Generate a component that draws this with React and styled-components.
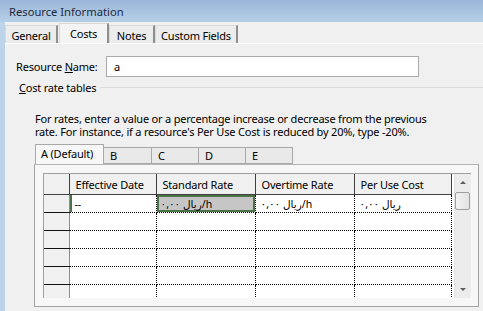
import styled, { createGlobalStyle } from "styled-components";

const GlobalStyle = createGlobalStyle`
  html, body {
    margin: 0;
    padding: 0;
    background: #f0f0f0;
  }
  body {
    font-family: "Noto Sans", "DejaVu Sans", sans-serif;
    font-size: 11px;
    letter-spacing: -0.2px;
    color: #000;
  }
`;

const Window = styled.div`
  width: 483px;
  height: 311px;
  overflow: hidden;
  display: flex;
  flex-direction: column;
  background: #f0f0f0;
`;

const TitleBar = styled.div`
  height: 22px;
  flex: none;
  display: flex;
  align-items: center;
  padding-left: 9px;
  font-size: 11.2px;
  letter-spacing: 0;
  color: #1e2b3c;
  background: linear-gradient(#9bb7d8, #b6cfe8);
`;

const Body = styled.div`
  flex: 1;
  display: flex;
  border-left: 5px solid #bcd3ea;
`;

const Content = styled.div`
  flex: 1;
  display: flex;
  flex-direction: column;
`;

const TabStrip = styled.div`
  height: 21px;
  flex: none;
  display: flex;
  align-items: flex-end;
  border-bottom: 1px solid #fbfbfb;
`;

const Tab = styled.div`
  width: ${(p) => p.$w}px;
  height: ${(p) => (p.$active ? 20 : 18)}px;
  box-sizing: border-box;
  display: flex;
  align-items: center;
  justify-content: center;
  padding-top: ${(p) => (p.$active ? 0 : 2)}px;
  border: 1px solid #d9d9d9;
  border-right: 2px solid #8f8f8f;
  border-bottom: none;
  background: ${(p) => (p.$active ? "#f4f4f4" : "#ececec")};
  margin-left: ${(p) => (p.$active ? 1 : 0)}px;
`;

const Page = styled.div`
  padding: 12px 0 0 11px;
  display: flex;
  flex-direction: column;
`;

const NameRow = styled.div`
  display: flex;
  align-items: center;
  height: 21px;
`;

const Label = styled.label`
  width: 90px;
  white-space: nowrap;
`;

const TextInput = styled.div`
  width: 313px;
  height: 21px;
  box-sizing: border-box;
  border: 1px solid #ababab;
  background: #fff;
  display: flex;
  align-items: center;
  padding-left: 7px;
`;

const GroupHead = styled.div`
  display: flex;
  align-items: center;
  margin: 2px 0 0 3px;
  height: 16px;
  &::after {
    content: "";
    flex: 1;
    margin-left: 4px;
    border-top: 1px solid #dcdcdc;
  }
`;

const Note = styled.p`
  margin: 17px 0 0 19px;
  line-height: 13px;
  width: 400px;
`;

const InnerTabs = styled.div`
  margin: 6px 0 0 19px;
  height: 20px;
  display: flex;
  align-items: flex-end;
`;

const InnerTab = styled.div`
  width: ${(p) => p.$w}px;
  height: ${(p) => (p.$active ? 20 : 17)}px;
  box-sizing: border-box;
  border: 1px solid #a9a9a9;
  border-bottom: ${(p) => (p.$active ? "none" : "1px solid #a9a9a9")};
  border-left: ${(p) => (p.$first ? "1px solid #a9a9a9" : "none")};
  background: ${(p) => (p.$active ? "#f7f7f7" : "#e9e9e9")};
  padding: ${(p) => (p.$active ? "0 0 2px 5px" : "0 0 0 6px")};
  display: flex;
  align-items: center;
`;

const InnerPanel = styled.div`
  margin-left: 18px;
  width: 445px;
  height: 143px;
  box-sizing: border-box;
  border: 1px solid #a3a3a3;
  border-top-color: #b5b5b5;
  background: #f7f7f7;
  padding: 8px 0 0 8px;
  display: flex;
`;

const GridFrame = styled.div`
  height: 124px;
  width: 427px;
  overflow: hidden;
  display: flex;
  background: #fff;
  border-left: 1px solid #a0a0a0;
  border-top: 1px solid #a0a0a0;
`;

const Table = styled.table`
  border-collapse: collapse;
  table-layout: fixed;
  width: 407px;
  height: fit-content;
`;

const HeadCell = styled.th`
  height: 20px;
  padding: 0 0 0 6px;
  font-weight: normal;
  text-align: left;
  background: #f0f0f0;
  border-right: 1px solid #404040;
  border-bottom: 1px solid #404040;
  white-space: nowrap;
  overflow: hidden;
`;

const RowHead = styled.td`
  height: 17px;
  padding: 0;
  background: #f0f0f0;
  border-right: 1px solid #8c8c8c;
  border-bottom: 1px solid #111;
`;

const Cell = styled.td`
  height: 17px;
  padding: 0 0 0 ${(p) => (p.$sel ? 4 : 5)}px;
  font-size: 10.5px;
  white-space: nowrap;
  overflow: hidden;
  border-right: 1px dotted #000;
  border-bottom: 1px dotted #000;
  background: ${(p) => (p.$sel ? "#c6c6c6" : "#fff")};
  box-shadow: ${(p) =>
    p.$sel
      ? "inset 0 0 0 2px #4b7449"
      : p.$mark
      ? "inset 2px 0 0 #4b7449"
      : "none"};
`;

const ScrollBar = styled.div`
  width: 17px;
  margin-left: 2px;
  box-sizing: border-box;
  background: #ececec;
  border-left: 1px solid #e2e2e2;
  display: flex;
  flex-direction: column;
  align-items: center;
`;

const Arrow = styled.div`
  width: 0;
  height: 0;
  border-left: 3px solid transparent;
  border-right: 3px solid transparent;
  ${(p) =>
    p.$down
      ? "border-top: 3px solid #5c5c5c; margin-top: auto; margin-bottom: 7px;"
      : "border-bottom: 3px solid #5c5c5c; margin-top: 7px;"}
`;

const Thumb = styled.div`
  width: 15px;
  height: 18px;
  margin-top: 8px;
  box-sizing: border-box;
  border: 1px solid #9f9f9f;
  border-radius: 2px;
  background: linear-gradient(90deg, #f3f3f3, #e2e2e2);
`;

const rate = "\u0660,\u0660\u0660\u200E \u0631\u064A\u0627\u0644\u200E/h";
const cost = "\u0660,\u0660\u0660\u200E \u0631\u064A\u0627\u0644";

const columns = [
  { w: 25, title: "" },
  { w: 87, title: "Effective Date" },
  { w: 99, title: "Standard Rate" },
  { w: 99, title: "Overtime Rate" },
  { w: 97, title: "Per Use Cost" },
];

export default function App() {
  const emptyRows = [1, 2, 3, 4, 5];
  return (
    <Window>
      <GlobalStyle />
      <TitleBar>Resource Information</TitleBar>
      <Body>
        <Content>
          <TabStrip>
            <Tab $w={53}>General</Tab>
            <Tab $w={50} $active>
              Costs
            </Tab>
            <Tab $w={46}>Notes</Tab>
            <Tab $w={83}>Custom Fields</Tab>
          </TabStrip>
          <Page>
            <NameRow>
              <Label>
                Resource <u>N</u>ame:
              </Label>
              <TextInput>a</TextInput>
            </NameRow>
            <GroupHead>
              <span>
                <u>C</u>ost rate tables
              </span>
            </GroupHead>
            <Note>
              For rates, enter a value or a percentage increase or decrease
              from the previous rate. For instance, if a resource's Per Use
              Cost is reduced by 20%, type -20%.
            </Note>
            <InnerTabs>
              <InnerTab $w={69} $active $first>
                A (Default)
              </InnerTab>
              <InnerTab $w={48}>B</InnerTab>
              <InnerTab $w={47}>C</InnerTab>
              <InnerTab $w={47}>D</InnerTab>
              <InnerTab $w={47}>E</InnerTab>
            </InnerTabs>
            <InnerPanel>
              <GridFrame>
                <Table>
                  <colgroup>
                    {columns.map((c, i) => (
                      <col key={i} style={{ width: c.w }} />
                    ))}
                  </colgroup>
                  <thead>
                    <tr>
                      {columns.map((c, i) => (
                        <HeadCell key={i}>{c.title}</HeadCell>
                      ))}
                    </tr>
                  </thead>
                  <tbody>
                    <tr>
                      <RowHead />
                      <Cell $mark>--</Cell>
                      <Cell $sel>{rate}</Cell>
                      <Cell>{rate}</Cell>
                      <Cell>{cost}</Cell>
                    </tr>
                    {emptyRows.map((r) => (
                      <tr key={r}>
                        <RowHead />
                        <Cell />
                        <Cell />
                        <Cell />
                        <Cell />
                      </tr>
                    ))}
                  </tbody>
                </Table>
                <ScrollBar>
                  <Arrow />
                  <Thumb />
                  <Arrow $down />
                </ScrollBar>
              </GridFrame>
            </InnerPanel>
          </Page>
        </Content>
      </Body>
    </Window>
  );
}
